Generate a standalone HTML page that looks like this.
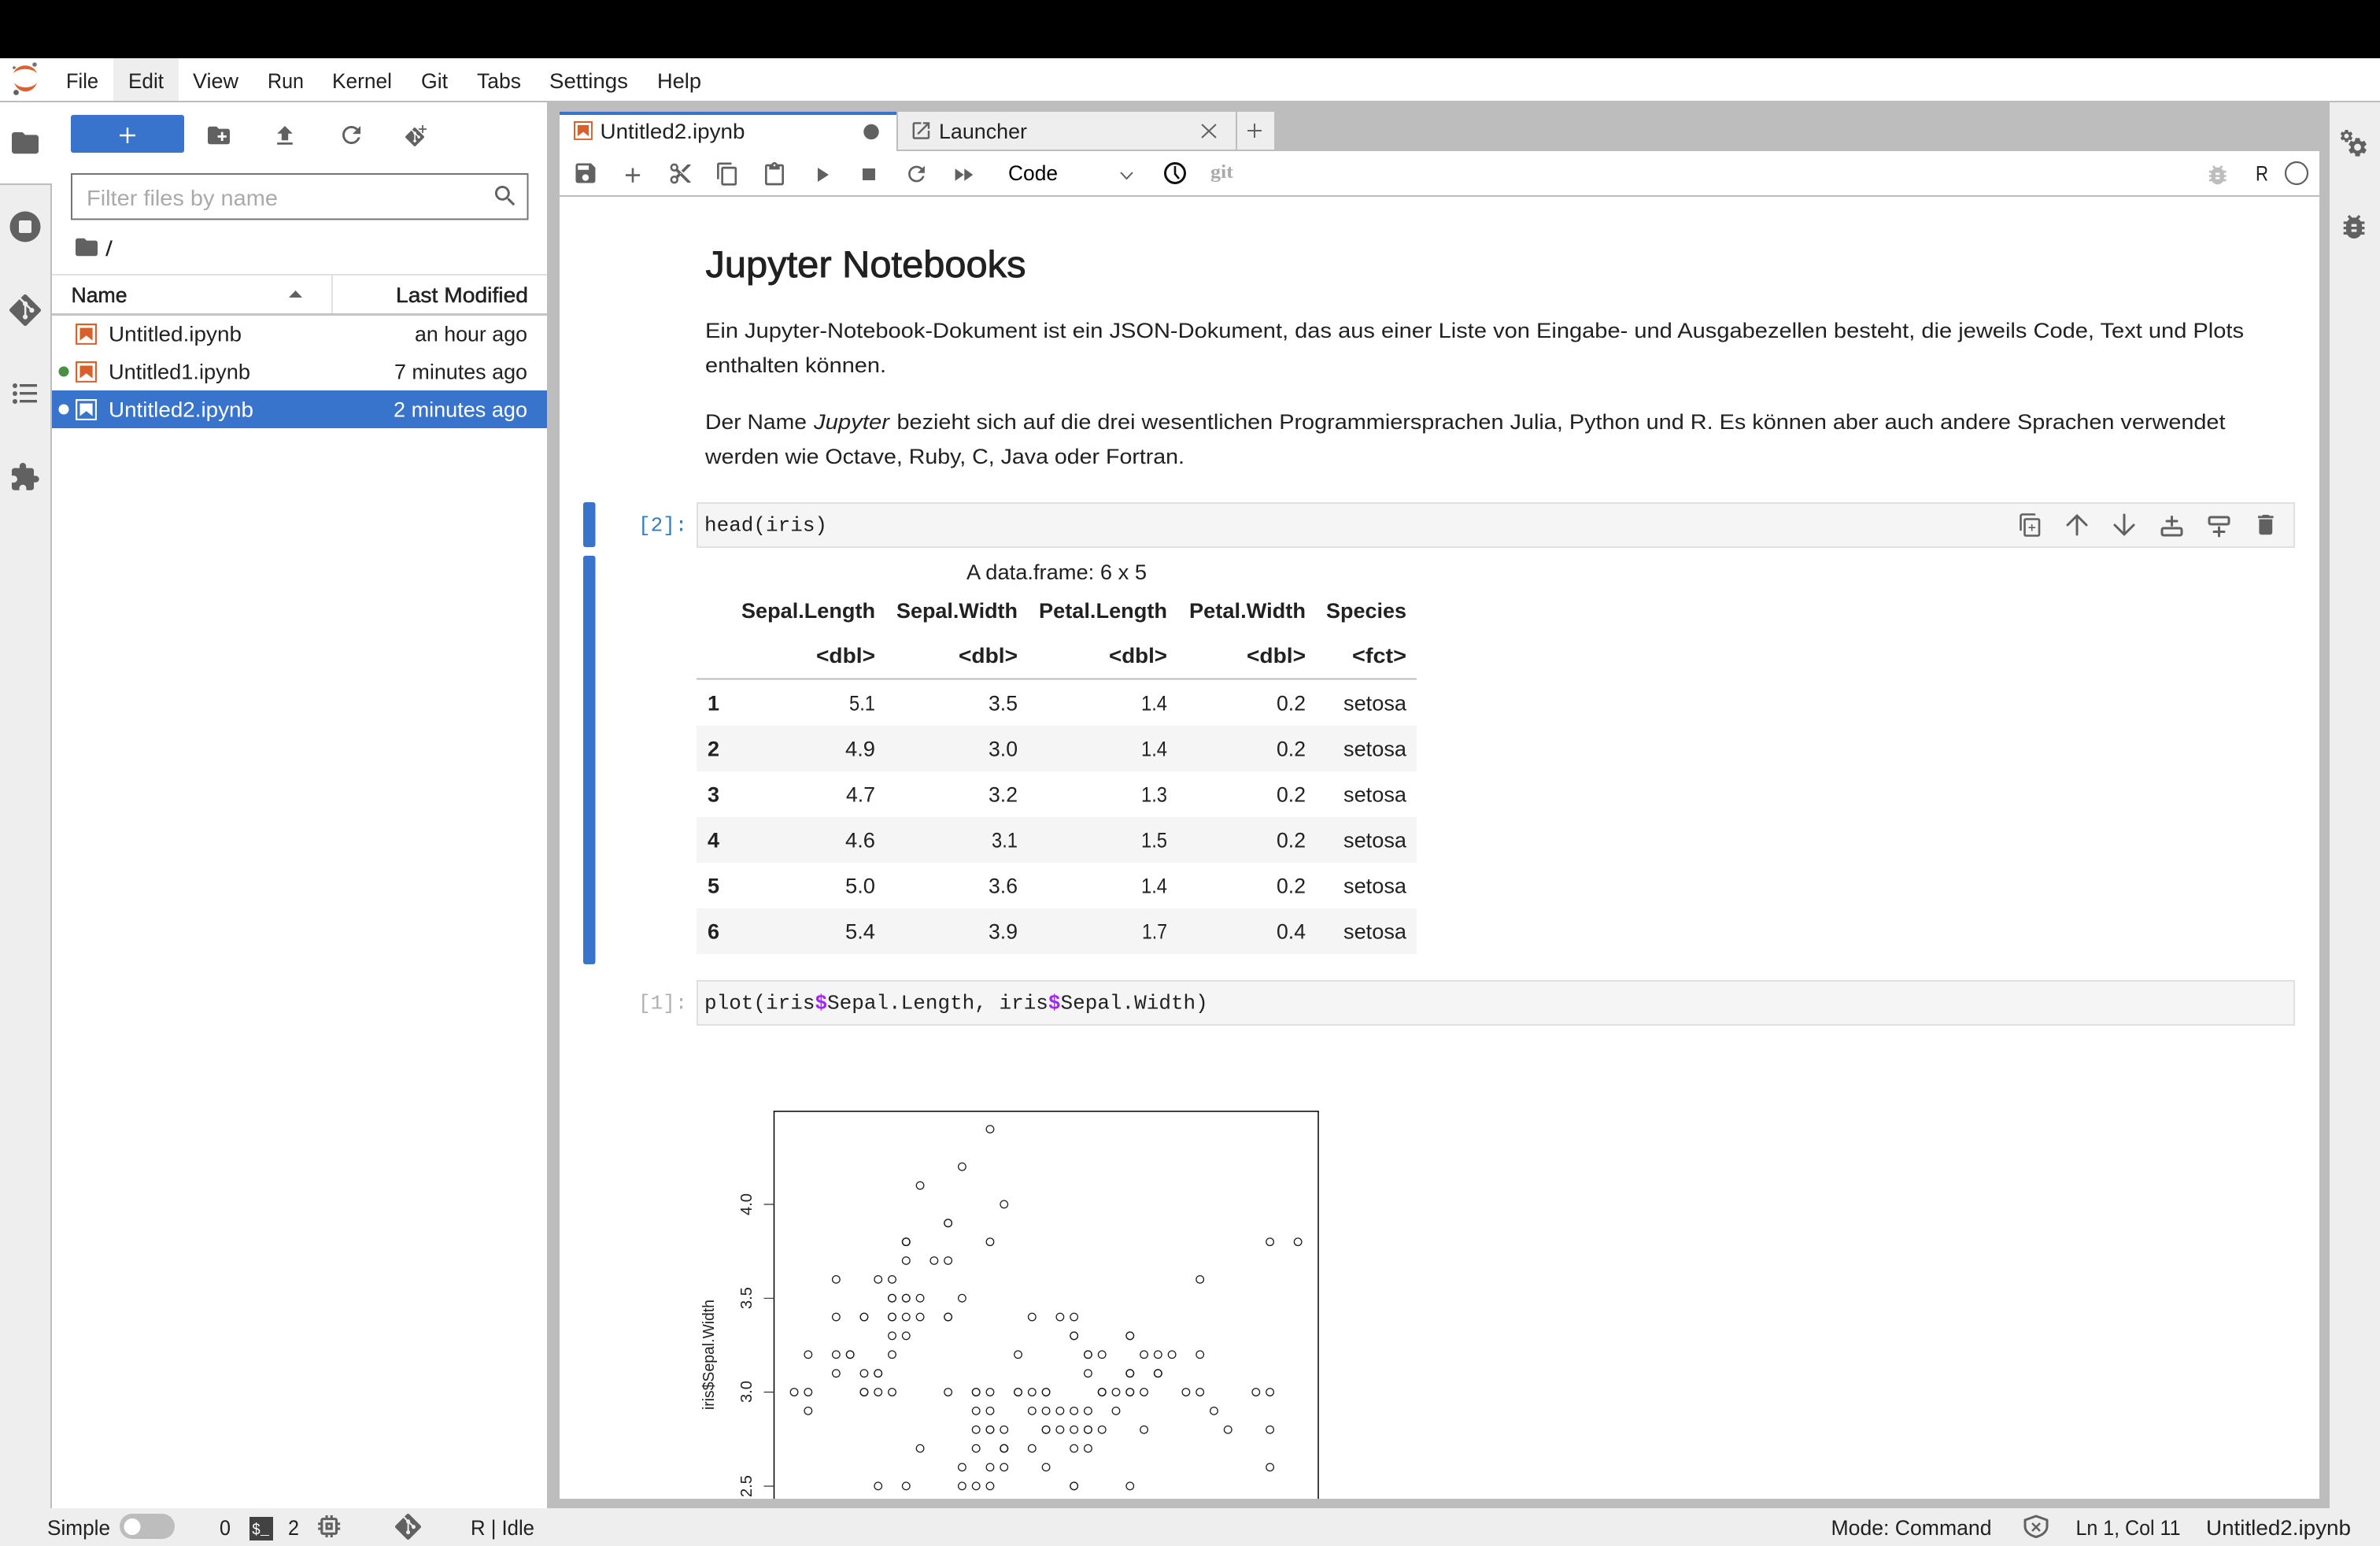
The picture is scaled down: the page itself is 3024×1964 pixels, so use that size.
<!DOCTYPE html>
<html lang="de">
<head>
<meta charset="utf-8">
<title>JupyterLab - Untitled2.ipynb</title>
<style>
html,body{margin:0;padding:0;background:#fff;width:3024px;height:1964px;overflow:hidden}
svg{display:block}
text{font-family:"Liberation Sans",Arial,sans-serif;font-size:27px;fill:#212121;white-space:pre}
.b{font-weight:700}
.m{stroke:#212121;stroke-width:.5px}
.w{fill:#fff}
.code{font-family:"Liberation Mono",monospace;font-size:26px}
.i{fill:#616161}
.s{fill:none;stroke:#616161;stroke-linecap:round;stroke-linejoin:round}
</style>
</head>
<body>
<svg xmlns="http://www.w3.org/2000/svg" width="3024" height="1964" viewBox="0 0 3024 1964">
<defs>
<symbol id="folder" viewBox="0 0 24 24"><path d="M10 4H4c-1.1 0-1.99.9-1.99 2L2 18c0 1.1.9 2 2 2h16c1.1 0 2-.9 2-2V8c0-1.1-.9-2-2-2h-8l-2-2z"/></symbol>
<symbol id="git" viewBox="0 0 24 24"><path d="M23.546 10.93L13.067.452c-.604-.603-1.582-.603-2.188 0L8.708 2.627l2.76 2.76c.645-.215 1.379-.07 1.889.441.516.515.658 1.258.438 1.9l2.658 2.66c.645-.223 1.387-.078 1.9.435.721.72.721 1.884 0 2.604-.719.719-1.881.719-2.6 0-.539-.541-.674-1.337-.404-1.996L12.86 8.955v6.525c.176.086.342.203.488.348.713.721.713 1.883 0 2.6-.719.721-1.889.721-2.609 0-.719-.719-.719-1.879 0-2.598.182-.18.387-.316.605-.406V8.835c-.217-.091-.424-.222-.6-.401-.545-.545-.676-1.342-.396-2.009L7.636 3.7.45 10.881c-.6.605-.6 1.584 0 2.189l10.48 10.477c.604.604 1.582.604 2.186 0l10.43-10.43c.605-.603.605-1.582 0-2.187"/></symbol>
<symbol id="puzzle" viewBox="0 0 24 24"><path d="M20.5 11H19V7c0-1.1-.9-2-2-2h-4V3.5C13 2.12 11.88 1 10.5 1S8 2.12 8 3.5V5H4c-1.1 0-1.99.9-1.99 2v3.8H3.5c1.49 0 2.7 1.21 2.7 2.7s-1.21 2.7-2.7 2.7H2V20c0 1.1.9 2 2 2h3.8v-1.5c0-1.49 1.21-2.7 2.7-2.7 1.49 0 2.7 1.21 2.7 2.7V22H17c1.1 0 2-.9 2-2v-4h1.5c1.38 0 2.5-1.12 2.5-2.5S21.88 11 20.5 11z"/></symbol>
<symbol id="newfolder" viewBox="0 0 24 24"><path d="M20 6h-8l-2-2H4c-1.11 0-1.99.89-1.99 2L2 18c0 1.11.89 2 2 2h16c1.11 0 2-.89 2-2V8c0-1.11-.89-2-2-2zm-1 8h-3v3h-2v-3h-3v-2h3V9h2v3h3v2z"/></symbol>
<symbol id="upload" viewBox="0 0 24 24"><path d="M9 16h6v-6h4l-7-7-7 7h4zm-4 2h14v2H5z"/></symbol>
<symbol id="refresh" viewBox="0 0 24 24"><path d="M17.65 6.35C16.2 4.9 14.21 4 12 4c-4.42 0-7.99 3.58-7.99 8s3.57 8 7.99 8c3.73 0 6.84-2.55 7.73-6h-2.08c-.82 2.33-3.04 4-5.65 4-3.31 0-6-2.69-6-6s2.69-6 6-6c1.66 0 3.14.69 4.22 1.78L13 11h7V4l-2.35 2.35z"/></symbol>
<symbol id="search" viewBox="0 0 24 24"><path d="M15.5 14h-.79l-.28-.27C15.41 12.59 16 11.11 16 9.5 16 5.91 13.09 3 9.5 3S3 5.91 3 9.5 5.91 16 9.5 16c1.61 0 3.09-.59 4.23-1.57l.27.28v.79l5 4.99L20.49 19l-4.99-5zm-6 0C7.01 14 5 11.99 5 9.5S7.01 5 9.5 5 14 7.01 14 9.5 11.99 14 9.5 14z"/></symbol>
<symbol id="save" viewBox="0 0 24 24"><path d="M17 3H5c-1.11 0-2 .9-2 2v14c0 1.1.89 2 2 2h14c1.1 0 2-.9 2-2V7l-4-4zm-5 16c-1.66 0-3-1.34-3-3s1.34-3 3-3 3 1.34 3 3-1.34 3-3 3zm3-10H5V5h10v4z"/></symbol>
<symbol id="add" viewBox="0 0 24 24"><path d="M19 13h-6v6h-2v-6H5v-2h6V5h2v6h6v2z"/></symbol>
<symbol id="cut" viewBox="0 0 24 24"><path d="M9.64 7.64c.23-.5.36-1.05.36-1.64 0-2.21-1.79-4-4-4S2 3.79 2 6s1.79 4 4 4c.59 0 1.14-.13 1.64-.36L10 12l-2.36 2.36C7.14 14.13 6.59 14 6 14c-2.21 0-4 1.79-4 4s1.79 4 4 4 4-1.79 4-4c0-.59-.13-1.14-.36-1.64L12 14l7 7h3v-1L9.64 7.64zM6 8c-1.1 0-2-.89-2-2s.9-2 2-2 2 .89 2 2-.9 2-2 2zm0 12c-1.1 0-2-.89-2-2s.9-2 2-2 2 .89 2 2-.9 2-2 2zm6-7.5c-.28 0-.5-.22-.5-.5s.22-.5.5-.5.5.22.5.5-.22.5-.5.5zM19 3l-6 6 2 2 7-7V3h-3z"/></symbol>
<symbol id="copy" viewBox="0 0 24 24"><path d="M16 1H4c-1.1 0-2 .9-2 2v14h2V3h12V1zm3 4H8c-1.1 0-2 .9-2 2v14c0 1.1.9 2 2 2h11c1.1 0 2-.9 2-2V7c0-1.1-.9-2-2-2zm0 16H8V7h11v14z"/></symbol>
<symbol id="paste" viewBox="0 0 24 24"><path d="M19 2h-4.18C14.4.84 13.3 0 12 0c-1.3 0-2.4.84-2.82 2H5c-1.1 0-2 .9-2 2v16c0 1.1.9 2 2 2h14c1.1 0 2-.9 2-2V4c0-1.1-.9-2-2-2zm-7 0c.55 0 1 .45 1 1s-.45 1-1 1-1-.45-1-1 .45-1 1-1zm7 18H5V4h2v3h10V4h2v16z"/></symbol>
<symbol id="ff" viewBox="0 0 24 24"><path d="M4 18l8.5-6L4 6v12zm9-12v12l8.5-6L13 6z"/></symbol>
<symbol id="launch" viewBox="0 0 24 24"><path d="M19 19H5V5h7V3H5c-1.11 0-2 .9-2 2v14c0 1.1.89 2 2 2h14c1.1 0 2-.9 2-2v-7h-2v7zM14 3v2h3.59l-9.83 9.83 1.41 1.41L19 6.41V10h2V3h-7z"/></symbol>
<symbol id="bug" viewBox="0 0 24 24"><path d="M20 8h-2.81c-.45-.78-1.07-1.45-1.82-1.96L17 4.41 15.59 3l-2.17 2.17C12.96 5.06 12.49 5 12 5c-.49 0-.96.06-1.41.17L8.41 3 7 4.41l1.62 1.63C7.88 6.55 7.26 7.22 6.81 8H4v2h2.09c-.05.33-.09.66-.09 1v1H4v2h2v1c0 .34.04.67.09 1H4v2h2.81c1.04 1.79 2.97 3 5.19 3s4.15-1.21 5.19-3H20v-2h-2.09c.05-.33.09-.66.09-1v-1h2v-2h-2v-1c0-.34-.04-.67-.09-1H20V8zm-6 8h-4v-2h4v2zm0-4h-4v-2h4v2z"/></symbol>
<symbol id="gear" viewBox="0 0 24 24"><path d="M19.14 12.94c.04-.3.06-.61.06-.94 0-.32-.02-.64-.07-.94l2.03-1.58c.18-.14.23-.41.12-.61l-1.92-3.32c-.12-.22-.37-.29-.59-.22l-2.39.96c-.5-.38-1.03-.7-1.62-.94l-.36-2.54c-.04-.24-.24-.41-.48-.41h-3.84c-.24 0-.43.17-.47.41l-.36 2.54c-.59.24-1.13.57-1.62.94l-2.39-.96c-.22-.08-.47 0-.59.22L2.74 8.87c-.12.21-.08.47.12.61l2.03 1.58c-.05.3-.09.63-.09.94s.02.64.07.94l-2.03 1.58c-.18.14-.23.41-.12.61l1.92 3.32c.12.22.37.29.59.22l2.39-.96c.5.38 1.03.7 1.62.94l.36 2.54c.05.24.24.41.48.41h3.84c.24 0 .44-.17.47-.41l.36-2.54c.59-.24 1.13-.56 1.62-.94l2.39.96c.22.08.47 0 .59-.22l1.92-3.32c.12-.22.07-.47-.12-.61l-2.01-1.58zM12 15.6c-1.98 0-3.6-1.62-3.6-3.6s1.62-3.6 3.6-3.6 3.6 1.62 3.6 3.6-1.62 3.6-3.6 3.6z"/></symbol>
<symbol id="trash" viewBox="0 0 24 24"><path d="M6 19c0 1.1.9 2 2 2h8c1.1 0 2-.9 2-2V7H6v12zM19 4h-3.5l-1-1h-5l-1 1H5v2h14V4z"/></symbol>
<symbol id="cpu" viewBox="0 0 24 24"><path d="M15 9H9v6h6V9zm-2 4h-2v-2h2v2zm8-2V9h-2V7c0-1.1-.9-2-2-2h-2V3h-2v2h-2V3H9v2H7c-1.1 0-2 .9-2 2v2H3v2h2v2H3v2h2v2c0 1.1.9 2 2 2h2v2h2v-2h2v2h2v-2h2c1.1 0 2-.9 2-2v-2h2v-2h-2v-2h2zm-4 6H7V7h10v10z"/></symbol>
<symbol id="nb" viewBox="0 0 22 22"><path d="M18.7 3.3v15.4H3.3V3.3h15.4m1.5-1.5H1.8v18.3h18.3l.1-18.3z"/><path d="M16.5 16.5l-5.4-4.3-5.6 4.3v-11h11z"/></symbol>
<ellipse id="o" rx=".27" ry=".2" fill="none" stroke="#1a1a1a" stroke-width="1.25" vector-effect="non-scaling-stroke"/>
</defs>

<!-- page chrome -->
<rect width="3024" height="1964" fill="#fff"/>
<rect width="3024" height="74" fill="#000"/>
<rect x="144" y="74" width="83" height="54" fill="#eee"/>
<rect y="128" width="3024" height="2" fill="#bdbdbd"/>

<!-- logo -->
<path d="M17 93C22 80 42 80 47 93C40 86 24 86 17 93Z" fill="#dd6130"/>
<path d="M18 105C24 113 41 113 47 105C42 120 23 120 18 105Z" fill="#dd6130"/>
<circle cx="44" cy="82" r="2.8" fill="#757575"/><circle cx="18" cy="86" r="1.9" fill="#757575"/><circle cx="20.5" cy="117.5" r="3.4" fill="#616161"/>

<!-- menu -->
<text x="84" y="112" textLength="41" lengthAdjust="spacingAndGlyphs">File</text>
<text x="163" y="112" textLength="45" lengthAdjust="spacingAndGlyphs">Edit</text>
<text x="245" y="112" textLength="58" lengthAdjust="spacingAndGlyphs">View</text>
<text x="340" y="112" textLength="46" lengthAdjust="spacingAndGlyphs">Run</text>
<text x="422" y="112" textLength="76" lengthAdjust="spacingAndGlyphs">Kernel</text>
<text x="535" y="112" textLength="34" lengthAdjust="spacingAndGlyphs">Git</text>
<text x="606" y="112" textLength="56" lengthAdjust="spacingAndGlyphs">Tabs</text>
<text x="698" y="112" textLength="100" lengthAdjust="spacingAndGlyphs">Settings</text>
<text x="835" y="112" textLength="56" lengthAdjust="spacingAndGlyphs">Help</text>

<!-- left activity bar -->
<rect y="235" width="66" height="1681" fill="#eee"/>
<rect y="233" width="66" height="2" fill="#bdbdbd"/>
<rect x="64" y="233" width="2" height="1683" fill="#bdbdbd"/>
<use href="#folder" class="i" x="11.6" y="161.2" width="40.8" height="40.8"/>
<circle cx="32" cy="288" r="19.5" fill="#616161"/><rect x="24" y="280" width="16" height="16" rx="2" fill="#eee"/>
<use href="#git" class="i" x="12" y="374" width="40" height="40"/>
<g fill="#616161"><circle cx="19" cy="490" r="3"/><circle cx="19" cy="500" r="3"/><circle cx="19" cy="510" r="3"/><rect x="25" y="488" width="22" height="3.4"/><rect x="25" y="498" width="22" height="3.4"/><rect x="25" y="508" width="22" height="3.4"/></g>
<use href="#puzzle" class="i" x="11.7" y="586.4" width="39.6" height="39.6"/>

<!-- right activity bar + main backdrop -->
<rect x="695" y="130" width="2266" height="1786" fill="#bdbdbd"/>
<rect x="2960" y="130" width="64" height="1786" fill="#eee"/>
<use href="#gear" class="i" x="2981" y="172.5" width="29" height="29"/>
<use href="#gear" class="i" x="2971.7" y="163" width="19.5" height="19.5"/>
<use href="#bug" class="i" x="2971" y="268" width="40" height="40"/>

<!-- file browser -->
<rect x="90" y="146" width="144" height="48" rx="3" fill="#3873cc"/>
<path d="M162 162v20M152 172h20" stroke="#fff" stroke-width="2.4"/>
<use href="#newfolder" class="i" x="261.2" y="155.2" width="33.6" height="33.6"/>
<use href="#upload" class="i" x="345.2" y="155.8" width="33.6" height="33.6"/>
<use href="#refresh" class="i" x="429.3" y="154.3" width="34.5" height="34.5"/>
<use href="#git" class="i" x="515" y="162" width="24" height="24"/>
<path d="M537 159v10M532 164h10" stroke="#616161" stroke-width="1.8"/>
<rect x="91" y="221" width="579.5" height="57.500" fill="#fff" stroke="#757575" stroke-width="2"/>
<text x="110" y="261" style="font-size:28px;fill:#aaa" textLength="243" lengthAdjust="spacingAndGlyphs">Filter files by name</text>
<use href="#search" class="i" x="624.6" y="231.6" width="34.8" height="34.8"/>
<use href="#folder" class="i" x="93.2" y="297.2" width="33.6" height="33.6"/>
<text x="134" y="325" textLength="9" lengthAdjust="spacingAndGlyphs">/</text>
<rect x="66" y="348" width="629" height="2" fill="#e0e0e0"/>
<rect x="66" y="398" width="629" height="3" fill="#c4c4c4"/>
<rect x="421" y="350" width="2" height="48" fill="#e0e0e0"/>
<text class="m" x="90.500" y="384" textLength="71" lengthAdjust="spacingAndGlyphs">Name</text>
<path d="M367 378L375.500 369L384 378Z" fill="#616161"/>
<text class="m" x="503" y="384" textLength="168" lengthAdjust="spacingAndGlyphs">Last Modified</text>

<use href="#nb" fill="#d9602a" x="93.400" y="408.400" width="32.3" height="32.3"/>
<text x="138" y="433.500" textLength="169" lengthAdjust="spacingAndGlyphs">Untitled.ipynb</text>
<text x="527" y="433.500" textLength="143" lengthAdjust="spacingAndGlyphs">an hour ago</text>
<circle cx="81" cy="472" r="6.500" fill="#4a8f45"/>
<use href="#nb" fill="#d9602a" x="93.400" y="456.400" width="32.3" height="32.3"/>
<text x="138" y="481.500" textLength="180" lengthAdjust="spacingAndGlyphs">Untitled1.ipynb</text>
<text x="501" y="481.500" textLength="169" lengthAdjust="spacingAndGlyphs">7 minutes ago</text>
<rect x="66" y="496" width="629" height="48" fill="#3873cc"/>
<circle cx="81" cy="520" r="6.500" fill="#fff"/>
<use href="#nb" fill="#fff" x="93.400" y="504.400" width="32.3" height="32.3"/>
<text class="w" x="138" y="529.500" textLength="184" lengthAdjust="spacingAndGlyphs">Untitled2.ipynb</text>
<text class="w" x="500" y="529.500" textLength="170" lengthAdjust="spacingAndGlyphs">2 minutes ago</text>

<!-- tabs -->
<rect x="711" y="142" width="428" height="50" fill="#fff"/>
<rect x="711" y="142" width="428" height="4" fill="#3873cc"/>
<rect x="1139" y="142" width="480" height="48" fill="#eee"/>
<rect x="1139" y="142" width="2" height="50" fill="#bdbdbd"/>
<rect x="1570" y="142" width="2" height="48" fill="#bdbdbd"/>
<rect x="1139" y="190" width="480" height="2" fill="#bdbdbd"/>
<use href="#nb" fill="#d9602a" x="726.700" y="151.700" width="28.6" height="28.6"/>
<text x="762.500" y="176" textLength="184" lengthAdjust="spacingAndGlyphs">Untitled2.ipynb</text>
<circle cx="1107" cy="167.500" r="9.700" fill="#616161"/>
<use href="#launch" class="i" x="1156" y="151.600" width="28.8" height="28.8"/>
<text x="1193" y="176" textLength="112" lengthAdjust="spacingAndGlyphs">Launcher</text>
<path d="M1527 158l18 17M1545 158l-18 17" stroke="#616161" stroke-width="2"/>
<path d="M1594 157v18M1585 166h18" stroke="#616161" stroke-width="2"/>

<!-- notebook body -->
<rect x="711" y="192" width="2236" height="1712" fill="#fff"/>
<rect x="711" y="248" width="2236" height="2" fill="#bdbdbd"/>

<!-- notebook toolbar -->
<use href="#save" class="i" x="727.300" y="203.300" width="33.3" height="33.3"/>
<use href="#add" class="i" x="788.400" y="207" width="31.2" height="31.2"/>
<use href="#cut" class="i" x="849" y="205" width="31" height="31"/>
<use href="#copy" class="i" x="908.400" y="205.200" width="31.7" height="31.7"/>
<use href="#paste" class="i" x="968" y="206" width="32" height="32"/>
<path d="M1039 213L1053 222L1039 231Z" fill="#616161"/>
<rect x="1096" y="214" width="16" height="15" fill="#616161"/>
<use href="#refresh" class="i" x="1148.900" y="205.400" width="31.2" height="31.2"/>
<use href="#ff" class="i" x="1208.400" y="206.400" width="31.2" height="31.2"/>
<text x="1281" y="229" textLength="63" lengthAdjust="spacingAndGlyphs" style="fill:#000">Code</text>
<path d="M1424 219l7.500 8 7.500-8" fill="none" stroke="#616161" stroke-width="2"/>
<circle cx="1493" cy="220" r="12.500" fill="none" stroke="#111" stroke-width="3"/>
<path d="M1493 211v10l5 6" fill="none" stroke="#111" stroke-width="2.600"/>
<text x="1538" y="226" textLength="29" lengthAdjust="spacingAndGlyphs" style="font-family:'Liberation Serif',serif;font-weight:700;font-size:24px;fill:#aaa">git</text>
<use href="#bug" fill="#bdbdbd" x="2801.500" y="206" width="32.4" height="32.4"/>
<text x="2866" y="229.500" textLength="16" lengthAdjust="spacingAndGlyphs">R</text>
<circle cx="2918" cy="220" r="14" fill="none" stroke="#616161" stroke-width="2.200"/>

<!-- markdown cell -->
<text class="m" x="896.500" y="352" style="font-size:47px;stroke-width:.9px" textLength="407" lengthAdjust="spacingAndGlyphs">Jupyter Notebooks</text>
<text x="896" y="429" textLength="1955" lengthAdjust="spacingAndGlyphs">Ein Jupyter-Notebook-Dokument ist ein JSON-Dokument, das aus einer Liste von Eingabe- und Ausgabezellen besteht, die jeweils Code, Text und Plots</text>
<text x="896" y="473" textLength="230" lengthAdjust="spacingAndGlyphs">enthalten können.</text>
<text x="896" y="545" textLength="129" lengthAdjust="spacingAndGlyphs">Der Name</text>
<text x="1034" y="545" textLength="96" lengthAdjust="spacingAndGlyphs" style="font-style:italic">Jupyter</text>
<text x="1139.500" y="545" textLength="1688" lengthAdjust="spacingAndGlyphs">bezieht sich auf die drei wesentlichen Programmiersprachen Julia, Python und R. Es können aber auch andere Sprachen verwendet</text>
<text x="896" y="589" textLength="609" lengthAdjust="spacingAndGlyphs">werden wie Octave, Ruby, C, Java oder Fortran.</text>

<!-- code cell 1 -->
<rect x="741" y="638" width="15.500" height="57" rx="3" fill="#3873cc"/>
<rect x="741" y="706" width="15.500" height="519" rx="3" fill="#3873cc"/>
<text class="code" x="811" y="674.500" style="fill:#307fc1">[2]:</text>
<rect x="886" y="639" width="2029" height="56" fill="#f5f5f5" stroke="#e0e0e0" stroke-width="2"/>
<text class="code" x="895" y="674.500">head(iris)</text>

<path d="M2567.500 673V656q0-2.500 2.500-2.500h15" class="s" stroke-width="2.600"/>
<rect x="2572.500" y="659.500" width="18.500" height="21" rx="1.500" class="s" stroke-width="2.600"/>
<path d="M2581.700 666.500v7.500M2578 670.200h7.500" class="s" stroke-width="1.600"/>
<path d="M2639 679V655M2627 667l12-12 12 12" class="s" stroke-width="3"/>
<path d="M2699 654v25M2687 667l12 12 12-12" class="s" stroke-width="3"/>
<rect x="2747" y="671" width="25" height="9" rx="2" class="s" stroke-width="3"/>
<path d="M2759.500 656.500v11M2753 662h13" class="s" stroke-width="3"/>
<rect x="2807" y="657" width="25" height="9" rx="2" class="s" stroke-width="3"/>
<path d="M2819.500 670v11M2813 675.500h13" class="s" stroke-width="3"/>
<use href="#trash" class="i" x="2862" y="649.800" width="33.6" height="33.6"/>

<!-- data frame output -->
<text x="1228" y="736" textLength="229" lengthAdjust="spacingAndGlyphs">A data.frame: 6 x 5</text>
<text class="b" x="942" y="785" textLength="170" lengthAdjust="spacingAndGlyphs">Sepal.Length</text>
<text class="b" x="1139" y="785" textLength="154" lengthAdjust="spacingAndGlyphs">Sepal.Width</text>
<text class="b" x="1320" y="785" textLength="163" lengthAdjust="spacingAndGlyphs">Petal.Length</text>
<text class="b" x="1511" y="785" textLength="148" lengthAdjust="spacingAndGlyphs">Petal.Width</text>
<text class="b" x="1685" y="785" textLength="102" lengthAdjust="spacingAndGlyphs">Species</text>
<text class="b" x="1037" y="842" textLength="75" lengthAdjust="spacingAndGlyphs">&lt;dbl&gt;</text>
<text class="b" x="1218" y="842" textLength="75" lengthAdjust="spacingAndGlyphs">&lt;dbl&gt;</text>
<text class="b" x="1409" y="842" textLength="74" lengthAdjust="spacingAndGlyphs">&lt;dbl&gt;</text>
<text class="b" x="1584" y="842" textLength="75" lengthAdjust="spacingAndGlyphs">&lt;dbl&gt;</text>
<text class="b" x="1718" y="842" textLength="69" lengthAdjust="spacingAndGlyphs">&lt;fct&gt;</text>
<rect x="885" y="861.500" width="915" height="2" fill="#bdbdbd"/>
<rect x="885" y="922" width="915" height="58" fill="#f5f5f5"/>
<rect x="885" y="1038" width="915" height="58" fill="#f5f5f5"/>
<rect x="885" y="1154" width="915" height="58" fill="#f5f5f5"/>

<text class="b" x="899" y="902.500">1</text><text x="1079" y="902.500" textLength="33" lengthAdjust="spacingAndGlyphs">5.1</text><text x="1256" y="902.500" textLength="37" lengthAdjust="spacingAndGlyphs">3.5</text><text x="1450" y="902.500" textLength="33" lengthAdjust="spacingAndGlyphs">1.4</text><text x="1622" y="902.500" textLength="37" lengthAdjust="spacingAndGlyphs">0.2</text><text x="1707" y="902.500" textLength="80" lengthAdjust="spacingAndGlyphs">setosa</text>
<text class="b" x="899" y="960.500">2</text><text x="1074" y="960.500" textLength="38" lengthAdjust="spacingAndGlyphs">4.9</text><text x="1256" y="960.500" textLength="37" lengthAdjust="spacingAndGlyphs">3.0</text><text x="1450" y="960.500" textLength="33" lengthAdjust="spacingAndGlyphs">1.4</text><text x="1622" y="960.500" textLength="37" lengthAdjust="spacingAndGlyphs">0.2</text><text x="1707" y="960.500" textLength="80" lengthAdjust="spacingAndGlyphs">setosa</text>
<text class="b" x="899" y="1018.500">3</text><text x="1075" y="1018.500" textLength="37" lengthAdjust="spacingAndGlyphs">4.7</text><text x="1256" y="1018.500" textLength="37" lengthAdjust="spacingAndGlyphs">3.2</text><text x="1450" y="1018.500" textLength="33" lengthAdjust="spacingAndGlyphs">1.3</text><text x="1622" y="1018.500" textLength="37" lengthAdjust="spacingAndGlyphs">0.2</text><text x="1707" y="1018.500" textLength="80" lengthAdjust="spacingAndGlyphs">setosa</text>
<text class="b" x="899" y="1076.500">4</text><text x="1074" y="1076.500" textLength="38" lengthAdjust="spacingAndGlyphs">4.6</text><text x="1260" y="1076.500" textLength="33" lengthAdjust="spacingAndGlyphs">3.1</text><text x="1450" y="1076.500" textLength="33" lengthAdjust="spacingAndGlyphs">1.5</text><text x="1622" y="1076.500" textLength="37" lengthAdjust="spacingAndGlyphs">0.2</text><text x="1707" y="1076.500" textLength="80" lengthAdjust="spacingAndGlyphs">setosa</text>
<text class="b" x="899" y="1134.500">5</text><text x="1074" y="1134.500" textLength="38" lengthAdjust="spacingAndGlyphs">5.0</text><text x="1256" y="1134.500" textLength="37" lengthAdjust="spacingAndGlyphs">3.6</text><text x="1450" y="1134.500" textLength="33" lengthAdjust="spacingAndGlyphs">1.4</text><text x="1622" y="1134.500" textLength="37" lengthAdjust="spacingAndGlyphs">0.2</text><text x="1707" y="1134.500" textLength="80" lengthAdjust="spacingAndGlyphs">setosa</text>
<text class="b" x="899" y="1192.500">6</text><text x="1074" y="1192.500" textLength="38" lengthAdjust="spacingAndGlyphs">5.4</text><text x="1256" y="1192.500" textLength="37" lengthAdjust="spacingAndGlyphs">3.9</text><text x="1451" y="1192.500" textLength="32" lengthAdjust="spacingAndGlyphs">1.7</text><text x="1622" y="1192.500" textLength="37" lengthAdjust="spacingAndGlyphs">0.4</text><text x="1707" y="1192.500" textLength="80" lengthAdjust="spacingAndGlyphs">setosa</text>

<!-- code cell 2 -->
<text class="code" x="811" y="1281.500" style="fill:#b0b0b0">[1]:</text>
<rect x="886" y="1246" width="2029" height="56" fill="#f5f5f5" stroke="#e0e0e0" stroke-width="2"/>
<text class="code" x="895" y="1281.500">plot(iris<tspan class="b" style="fill:#a2f">$</tspan>Sepal.Length, iris<tspan class="b" style="fill:#a2f">$</tspan>Sepal.Width)</text>

<!-- plot -->
<path d="M983.500 1904V1411.700H1675V1904" fill="none" stroke="#000" stroke-width="1.500"/>
<path d="M983.500 1530h-13M983.500 1649.300h-13M983.500 1768.500h-13M983.500 1888h-13" fill="none" stroke="#333" stroke-width="1.200"/>
<text transform="translate(955 1544) rotate(-90)" style="font-size:20px" textLength="28" lengthAdjust="spacingAndGlyphs">4.0</text>
<text transform="translate(955 1663) rotate(-90)" style="font-size:20px" textLength="28" lengthAdjust="spacingAndGlyphs">3.5</text>
<text transform="translate(955 1782) rotate(-90)" style="font-size:20px" textLength="28" lengthAdjust="spacingAndGlyphs">3.0</text>
<text transform="translate(955 1902) rotate(-90)" style="font-size:20px" textLength="28" lengthAdjust="spacingAndGlyphs">2.5</text>
<text transform="translate(907 1791) rotate(-90)" style="font-size:20px" textLength="140" lengthAdjust="spacingAndGlyphs">iris$Sepal.Width</text>
<g transform="translate(1009.05 2484.3) scale(17.78 -23.86)">
<use href="#o" x="8" y="35"/><use href="#o" x="6" y="30"/><use href="#o" x="4" y="32"/><use href="#o" x="3" y="31"/><use href="#o" x="7" y="36"/><use href="#o" x="11" y="39"/><use href="#o" x="3" y="34"/><use href="#o" x="7" y="34"/><use href="#o" x="1" y="29"/><use href="#o" x="6" y="31"/>
<use href="#o" x="11" y="37"/><use href="#o" x="5" y="34"/><use href="#o" x="5" y="30"/><use href="#o" x="0" y="30"/><use href="#o" x="15" y="40"/><use href="#o" x="14" y="44"/><use href="#o" x="11" y="39"/><use href="#o" x="8" y="35"/><use href="#o" x="14" y="38"/><use href="#o" x="8" y="38"/>
<use href="#o" x="11" y="34"/><use href="#o" x="8" y="37"/><use href="#o" x="3" y="36"/><use href="#o" x="8" y="33"/><use href="#o" x="5" y="34"/><use href="#o" x="7" y="30"/><use href="#o" x="7" y="34"/><use href="#o" x="9" y="35"/><use href="#o" x="9" y="34"/><use href="#o" x="4" y="32"/>
<use href="#o" x="5" y="31"/><use href="#o" x="11" y="34"/><use href="#o" x="9" y="41"/><use href="#o" x="12" y="42"/><use href="#o" x="6" y="31"/><use href="#o" x="7" y="32"/><use href="#o" x="12" y="35"/><use href="#o" x="6" y="36"/><use href="#o" x="1" y="30"/><use href="#o" x="8" y="34"/>
<use href="#o" x="7" y="35"/><use href="#o" x="1" y="32"/><use href="#o" x="7" y="35"/><use href="#o" x="8" y="38"/><use href="#o" x="5" y="30"/><use href="#o" x="8" y="38"/><use href="#o" x="3" y="32"/><use href="#o" x="10" y="37"/><use href="#o" x="7" y="33"/>
<use href="#o" x="27" y="32"/><use href="#o" x="21" y="32"/><use href="#o" x="26" y="31"/><use href="#o" x="22" y="28"/><use href="#o" x="14" y="28"/><use href="#o" x="20" y="33"/><use href="#o" x="23" y="29"/><use href="#o" x="9" y="27"/><use href="#o" x="16" y="30"/><use href="#o" x="18" y="29"/>
<use href="#o" x="13" y="29"/><use href="#o" x="24" y="31"/><use href="#o" x="13" y="30"/><use href="#o" x="15" y="27"/><use href="#o" x="13" y="25"/><use href="#o" x="16" y="32"/><use href="#o" x="18" y="28"/><use href="#o" x="20" y="25"/><use href="#o" x="18" y="28"/><use href="#o" x="21" y="29"/>
<use href="#o" x="23" y="30"/><use href="#o" x="25" y="28"/><use href="#o" x="24" y="30"/><use href="#o" x="17" y="29"/><use href="#o" x="14" y="26"/><use href="#o" x="15" y="27"/><use href="#o" x="17" y="27"/><use href="#o" x="11" y="30"/><use href="#o" x="17" y="34"/><use href="#o" x="24" y="31"/>
<use href="#o" x="13" y="30"/><use href="#o" x="12" y="25"/><use href="#o" x="12" y="26"/><use href="#o" x="18" y="30"/><use href="#o" x="15" y="26"/><use href="#o" x="13" y="27"/><use href="#o" x="14" y="30"/><use href="#o" x="14" y="29"/><use href="#o" x="19" y="29"/><use href="#o" x="8" y="25"/><use href="#o" x="14" y="28"/>
<use href="#o" x="20" y="33"/><use href="#o" x="15" y="27"/><use href="#o" x="28" y="30"/><use href="#o" x="20" y="29"/><use href="#o" x="22" y="30"/><use href="#o" x="33" y="30"/><use href="#o" x="6" y="25"/><use href="#o" x="30" y="29"/><use href="#o" x="24" y="25"/><use href="#o" x="29" y="36"/>
<use href="#o" x="22" y="32"/><use href="#o" x="21" y="27"/><use href="#o" x="25" y="30"/><use href="#o" x="14" y="25"/><use href="#o" x="15" y="28"/><use href="#o" x="21" y="32"/><use href="#o" x="22" y="30"/><use href="#o" x="34" y="38"/><use href="#o" x="34" y="26"/><use href="#o" x="26" y="32"/>
<use href="#o" x="13" y="28"/><use href="#o" x="34" y="28"/><use href="#o" x="20" y="27"/><use href="#o" x="24" y="33"/><use href="#o" x="29" y="32"/><use href="#o" x="19" y="28"/><use href="#o" x="18" y="30"/><use href="#o" x="21" y="28"/><use href="#o" x="29" y="30"/><use href="#o" x="31" y="28"/>
<use href="#o" x="36" y="38"/><use href="#o" x="21" y="28"/><use href="#o" x="20" y="28"/><use href="#o" x="18" y="26"/><use href="#o" x="34" y="30"/><use href="#o" x="20" y="34"/><use href="#o" x="21" y="31"/><use href="#o" x="17" y="30"/><use href="#o" x="26" y="31"/><use href="#o" x="24" y="31"/>
<use href="#o" x="26" y="31"/><use href="#o" x="15" y="27"/><use href="#o" x="25" y="32"/><use href="#o" x="24" y="33"/><use href="#o" x="24" y="30"/><use href="#o" x="20" y="25"/><use href="#o" x="22" y="30"/><use href="#o" x="19" y="34"/><use href="#o" x="16" y="30"/>
</g>

<!-- status bar -->
<rect y="1916" width="3024" height="48" fill="#eee"/>
<text x="60" y="1950" textLength="80" lengthAdjust="spacingAndGlyphs">Simple</text>
<rect x="152" y="1923" width="70" height="32" rx="16" fill="#bdbdbd"/>
<circle cx="168" cy="1939.500" r="10.500" fill="#fff"/>
<text x="279" y="1950" textLength="14" lengthAdjust="spacingAndGlyphs">0</text>
<rect x="317" y="1927" width="30" height="30" fill="#424242"/>
<text class="code w" x="320" y="1949" style="font-size:20px" textLength="22" lengthAdjust="spacingAndGlyphs">$_</text>
<text x="366" y="1950" textLength="14" lengthAdjust="spacingAndGlyphs">2</text>
<use href="#cpu" class="i" x="399.500" y="1920.300" width="37.3" height="37.3"/>
<use href="#git" class="i" x="502" y="1923" width="33" height="33"/>
<text x="598" y="1950" textLength="81" lengthAdjust="spacingAndGlyphs">R | Idle</text>
<text x="2326.500" y="1950" textLength="204" lengthAdjust="spacingAndGlyphs">Mode: Command</text>
<path d="M2587 1926l-14 5v8c0 6.500 6 11.500 14 13.500c8-2 14-7 14-13.500v-8z" fill="none" stroke="#616161" stroke-width="3" stroke-linejoin="round"/>
<path d="M2582 1935l10 10M2592 1935l-10 10" stroke="#616161" stroke-width="2.500"/>
<text x="2637.500" y="1950" textLength="133" lengthAdjust="spacingAndGlyphs">Ln 1, Col 11</text>
<text x="2803" y="1950" textLength="184" lengthAdjust="spacingAndGlyphs">Untitled2.ipynb</text>
</svg>
</body>
</html>
